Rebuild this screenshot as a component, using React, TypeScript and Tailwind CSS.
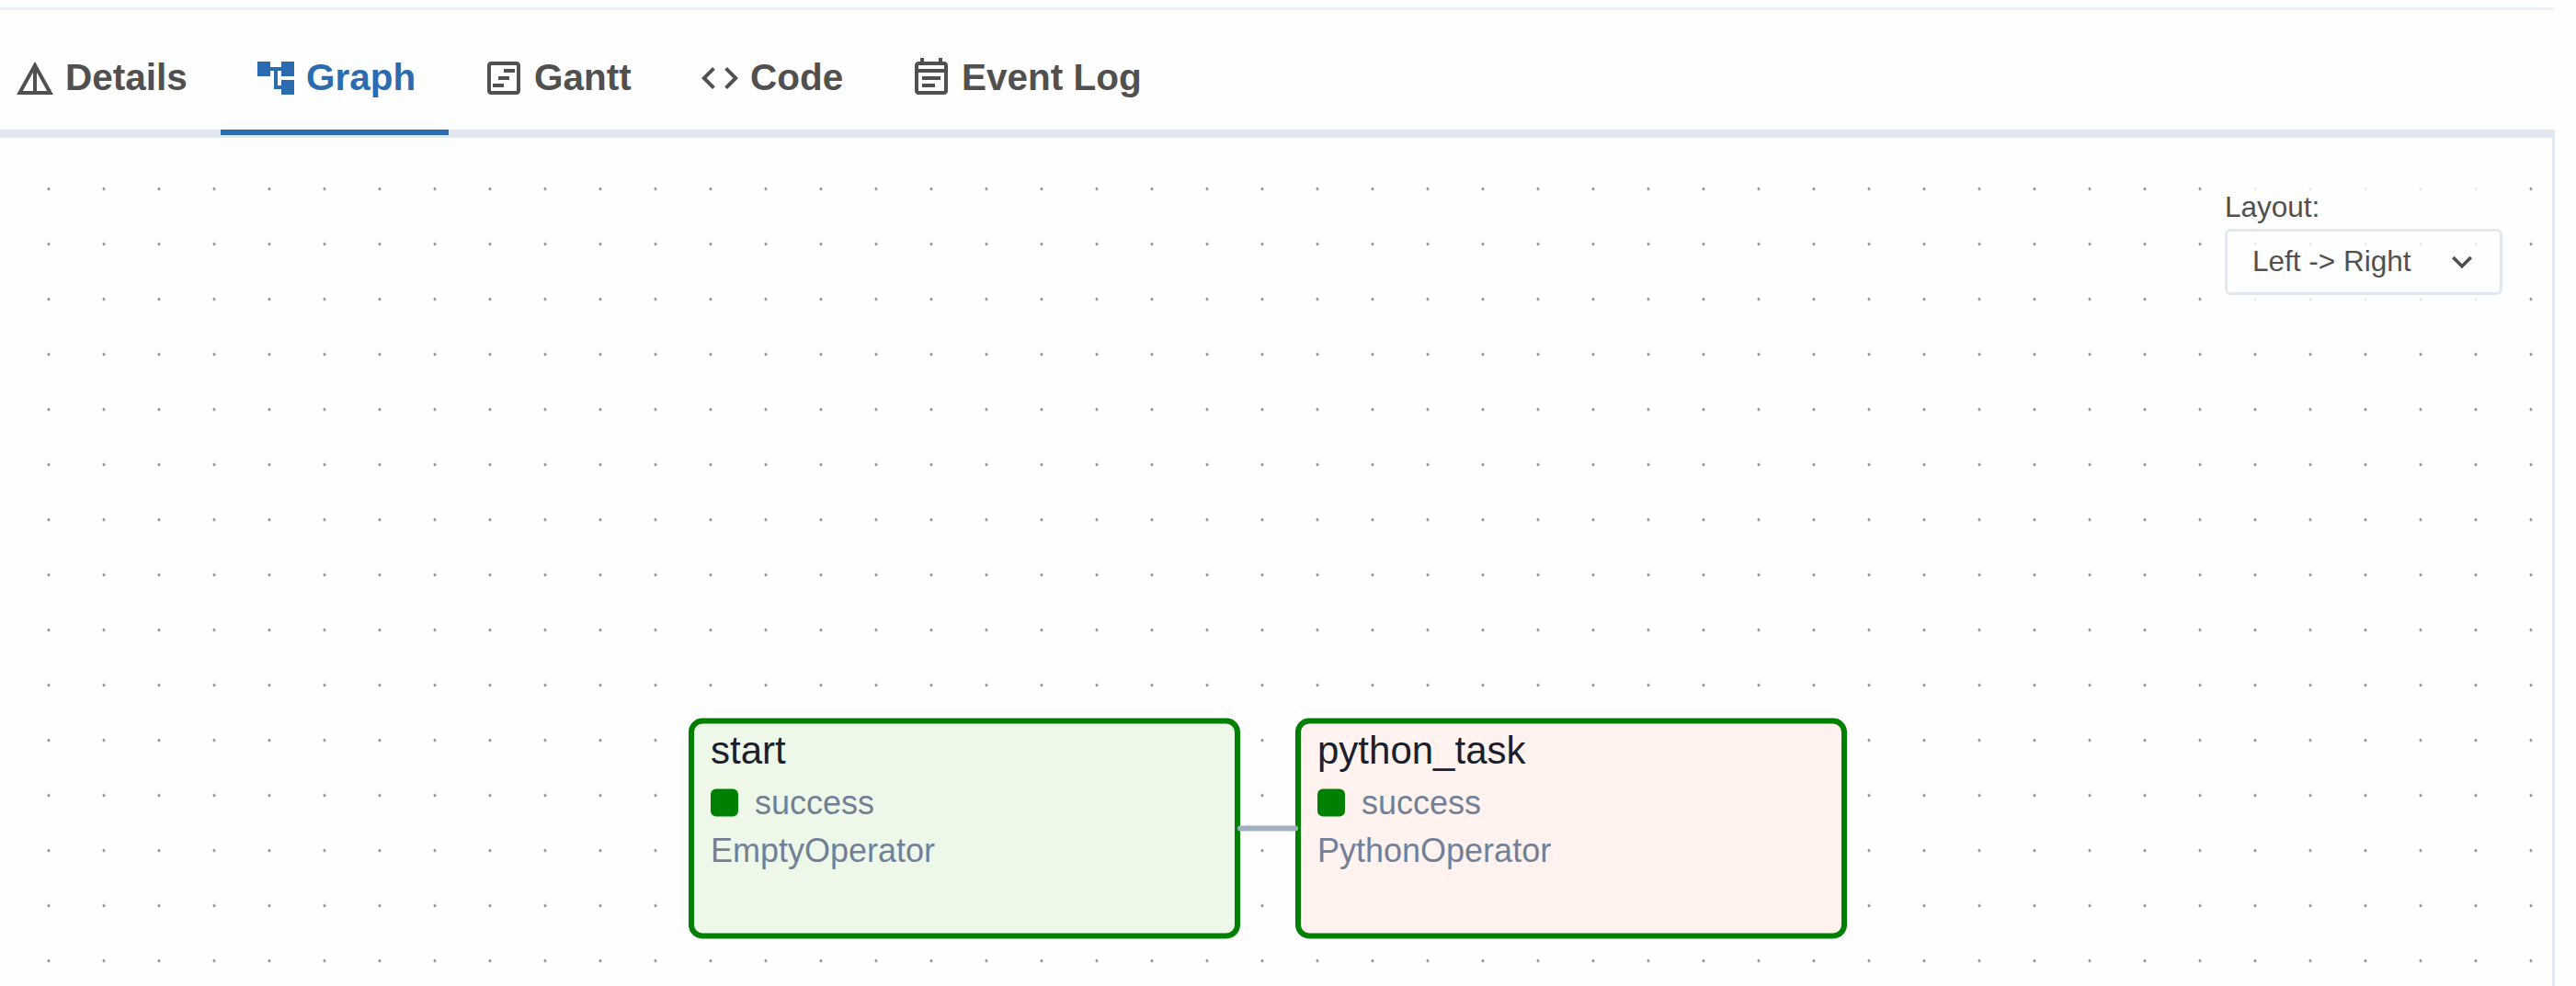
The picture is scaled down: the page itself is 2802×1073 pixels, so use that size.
import {
  MdAccountTree,
  MdCode,
  MdDetails,
  MdOutlineEventNote,
  MdOutlineViewTimeline,
  MdKeyboardArrowDown,
} from "react-icons/md";

const tabs = [
  { label: "Details", Icon: MdDetails, width: "w-[262px]", active: false },
  { label: "Graph", Icon: MdAccountTree, width: "w-[248px]", active: true },
  { label: "Gantt", Icon: MdOutlineViewTimeline, width: "w-[235px]", active: false },
  { label: "Code", Icon: MdCode, width: "w-[230px]", active: false },
  { label: "Event Log", Icon: MdOutlineEventNote, width: "w-[325px]", active: false },
];

function TaskNode({ name, operator, className }: { name: string; operator: string; className: string }) {
  return (
    <div
      className={`absolute top-[632px] flex h-[240px] w-[600px] translate-y-[-0.5px] flex-col rounded-[15px] border-[6px] border-[#008000] pl-[18px] ${className}`}
    >
      <div className="mt-[2px] h-[54px] text-[42px] leading-[54px] text-[#1a202c]">{name}</div>
      <div className="mt-[3px] flex h-[54px] items-center">
        <div className="h-[30px] w-[30px] rounded-[6px] bg-[#008000]" />
        <div className="ml-[18px] text-[36px] leading-[54px] text-[#718096]">{"success"}</div>
      </div>
      <div className="text-[36px] leading-[50px] text-[#718096]">{operator}</div>
    </div>
  );
}

export default function App() {
  return (
    <div className="flex h-[1073px] w-[2802px] flex-col overflow-hidden bg-[#fefefe] pt-2 font-['Liberation_Sans',Arial,sans-serif] text-[#51504f]">
      <div className="h-[3px] w-[2779px] shrink-0 bg-[#edf2f7]" />
      <div className="h-[139px] w-[2779px] shrink-0 border-b-[9px] border-[#e2e8f0]">
        <div className="-ml-[22px] flex h-[136px]">
          {tabs.map(({ label, Icon, width, active }) => (
            <div
              key={label}
              className={`flex shrink-0 items-center border-b-[6px] px-9 pt-[18px] ${width} ${
                active ? "border-[#2b6cb0] text-[#2b6cb0]" : "border-transparent"
              }`}
            >
              <Icon className="size-12 shrink-0" />
              <span className="mb-[3px] ml-[9px] text-[40.5px] font-bold leading-[54px] whitespace-nowrap">{label}</span>
            </div>
          ))}
        </div>
      </div>
      <div className="relative w-[2779px] flex-1 overflow-hidden border-r-[3px] border-[#e2e8f0]">
        <svg className="absolute inset-0 h-full w-full" aria-hidden="true">
          <pattern id="dots" x="23" y="25.5" width="60" height="60" patternUnits="userSpaceOnUse">
            <circle cx="30" cy="30" r="1.5" fill="#81818a" />
          </pattern>
          <rect width="100%" height="100%" fill="url(#dots)" />
        </svg>
        <TaskNode name="start" operator="EmptyOperator" className="left-[749px] bg-[#edf8e9]" />
        <TaskNode name="python_task" operator="PythonOperator" className="left-[1409px] bg-[#fff2ef]" />
        <div className="absolute top-[749px] left-[1346px] h-[6px] w-[66px] translate-y-[-0.5px] rounded-full bg-[#a0aec0]" />
        <div className="absolute top-[30px] left-[2420px] w-[302px] bg-[#fefefe]/80 pb-[9px]">
          <div className="pt-[22px] text-[31.5px] leading-[47px]">Layout:</div>
          <div className="flex h-[72px] items-center justify-between rounded-[6px] border-[3px] border-[#e2e8f0] pr-[19px] pl-[27px]">
            <span className="mb-[2px] text-[31.5px] leading-[48px]">{"Left -> Right"}</span>
            <MdKeyboardArrowDown className="size-[44px]" />
          </div>
        </div>
      </div>
    </div>
  );
}
